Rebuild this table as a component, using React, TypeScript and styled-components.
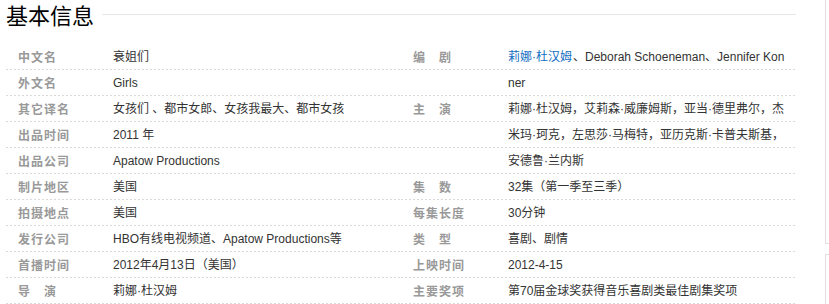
import React from "react";
import styled, { createGlobalStyle } from "styled-components";

const GlobalStyle = createGlobalStyle`
  html, body { margin: 0; padding: 0; background: #fff; }
  body {
    font-family: "Liberation Sans", Arial, "Noto Sans CJK SC", sans-serif;
    font-size: 12px;
    color: #333;
  }
`;

const Page = styled.div`
  display: flex;
  align-items: flex-start;
  padding-left: 6px;
  width: 823px;
  height: 304px;
  overflow: hidden;
`;

const Main = styled.section`
  width: 790px;
  flex: none;
`;

const Header = styled.div`
  display: flex;
  align-items: center;
  height: 28px;
`;

const Title = styled.h2`
  margin: 0;
  font-family: "Noto Sans CJK SC", sans-serif;
  font-size: 22px;
  font-weight: 400;
  line-height: 32px;
  color: #000;
`;

const TitleRule = styled.div`
  flex: 1;
  margin-left: 8px;
  border-top: 1px solid #e6e6e6;
`;

const Columns = styled.div`
  display: grid;
  grid-template-columns: 395px 395px;
  margin-top: 16px;
`;

const Column = styled.dl`
  margin: 0;
  display: flex;
  flex-direction: column;
`;

const Item = styled.div`
  display: flex;
  padding: 0 6px 0 12px;
  line-height: 26px;
  background-image: linear-gradient(to right, transparent 2px, #fff 2px),
    linear-gradient(to bottom, transparent 25px, #d9d9d9 25px);
  background-size: 4px 100%, 100% 26px;
  background-repeat: repeat, repeat;
`;

const Label = styled.dt`
  width: 95px;
  flex: none;
  font-family: "Noto Sans CJK SC", sans-serif;
  font-weight: 700;
  letter-spacing: 1px;
  color: #999;
  white-space: nowrap;
`;

const Value = styled.dd`
  margin: 0;
  flex: 1;
  min-width: 0;
  color: #333;
  word-break: break-all;
`;

const Link = styled.a`
  color: #136ec2;
  text-decoration: none;
  margin-right: 1px;
`;

const Aside = styled.aside`
  margin-left: 29px;
  flex: 1;
  display: flex;
  flex-direction: column;
`;

const Panel = styled.div<{ $first?: boolean }>`
  border-left: 1px solid #e0e0e0;
  height: ${(p) => (p.$first ? "243px" : "60px")};
  margin-top: ${(p) => (p.$first ? "0" : "10px")};
  ${(p) =>
    p.$first
      ? "border-bottom: 1px solid #e0e0e0;"
      : "border-top: 1px solid #e0e0e0;"}
`;

type Row = { label: string; value: React.ReactNode };

const left: Row[] = [
  { label: "中文名", value: "衰姐们" },
  { label: "外文名", value: "Girls" },
  { label: "其它译名", value: "女孩们 、都市女郎、女孩我最大、都市女孩" },
  { label: "出品时间", value: "2011 年" },
  { label: "出品公司", value: "Apatow Productions" },
  { label: "制片地区", value: "美国" },
  { label: "拍摄地点", value: "美国" },
  { label: "发行公司", value: "HBO有线电视频道、Apatow Productions等" },
  { label: "首播时间", value: "2012年4月13日（美国）" },
  { label: "导　演", value: "莉娜·杜汉姆" },
];

const right: Row[] = [
  {
    label: "编　剧",
    value: (
      <>
        <Link href="#">莉娜·杜汉姆</Link>、Deborah Schoeneman、Jennifer Konner
      </>
    ),
  },
  {
    label: "主　演",
    value:
      "莉娜·杜汉姆，艾莉森·威廉姆斯，亚当·德里弗尔，杰米玛·珂克，左思莎·马梅特，亚历克斯·卡普夫斯基，安德鲁·兰内斯",
  },
  { label: "集　数", value: "32集（第一季至三季）" },
  { label: "每集长度", value: "30分钟" },
  { label: "类　型", value: "喜剧、剧情" },
  { label: "上映时间", value: "2012-4-15" },
  { label: "主要奖项", value: "第70届金球奖获得音乐喜剧类最佳剧集奖项" },
];

const InfoColumn = ({ rows }: { rows: Row[] }) => (
  <Column>
    {rows.map((r) => (
      <Item key={r.label}>
        <Label>{r.label}</Label>
        <Value>{r.value}</Value>
      </Item>
    ))}
  </Column>
);

export default function App() {
  return (
    <>
      <GlobalStyle />
      <Page>
        <Main>
          <Header>
            <Title>基本信息</Title>
            <TitleRule />
          </Header>
          <Columns>
            <InfoColumn rows={left} />
            <InfoColumn rows={right} />
          </Columns>
        </Main>
        <Aside>
          <Panel $first />
          <Panel />
        </Aside>
      </Page>
    </>
  );
}
